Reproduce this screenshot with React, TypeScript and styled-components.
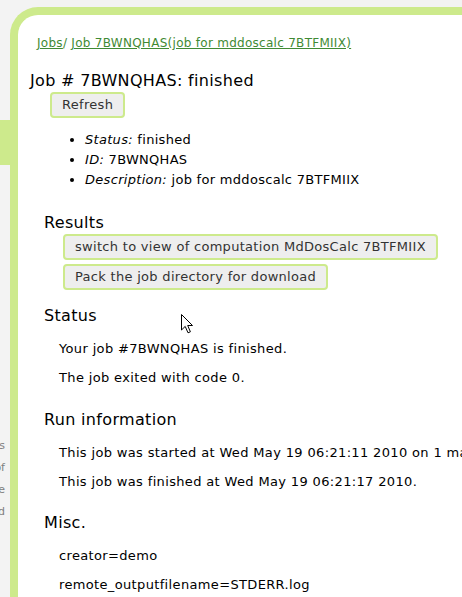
import React from "react";
import styled, { createGlobalStyle } from "styled-components";

const GREEN = "#cdea8c";

const Global = createGlobalStyle`
  html, body {
    margin: 0;
    padding: 0;
    background: #f3f3f3;
    overflow: hidden;
    font-family: "DejaVu Sans", Verdana, sans-serif;
  }
`;

const Page = styled.div`
  display: flex;
  align-items: flex-start;
  width: 900px;
  min-height: 597px;
  position: relative;
`;

const Sidebar = styled.div`
  width: 10px;
  flex-shrink: 0;
  overflow: hidden;
  display: flex;
  flex-direction: column;
  align-items: flex-end;
`;

const Tab = styled.div`
  width: 10px;
  height: 45px;
  margin-top: 120px;
  background: ${GREEN};
`;

const SideText = styled.div`
  margin-top: 270px;
  padding-right: 5px;
  font-size: 11px;
  line-height: 22px;
  color: #808080;
  text-align: right;
  white-space: nowrap;
  display: flex;
  flex-direction: column;
  align-items: flex-end;
`;

const Panel = styled.div`
  flex: 1;
  margin-top: 7px;
  min-height: 590px;
  background: #fff;
  border-left: 8px solid ${GREEN};
  border-top: 8px solid ${GREEN};
  border-top-left-radius: 28px;
  padding: 21px 0 0 12px;
  color: #000;
`;

const Crumbs = styled.div`
  margin-left: 7px;
  font-size: 12px;
  line-height: 14px;
  letter-spacing: 0.28px;
  color: #3f8a34;
`;

const CrumbLink = styled.a`
  color: #3f8a34;
  text-decoration: underline;
`;

const Title = styled.h1`
  margin: 21px 0 0 0;
  font-size: 16px;
  line-height: 20px;
  letter-spacing: 0.33px;
  font-weight: normal;
`;

const Button = styled.button<{ $indent?: number; $top?: number }>`
  display: block;
  margin: ${(p) => p.$top ?? 0}px 0 0 ${(p) => p.$indent ?? 0}px;
  padding: 3px 10px;
  font-family: "DejaVu Sans", Verdana, sans-serif;
  font-size: 13px;
  line-height: 16px;
  letter-spacing: 0.3px;
  color: #333;
  background: #eeeeee;
  border: 2px solid ${GREEN};
  border-radius: 4px;
  white-space: nowrap;
`;

const Facts = styled.ul`
  margin: 11.5px 0 0 0;
  padding-left: 55px;
  font-size: 13px;
  line-height: 20px;
  letter-spacing: 0.3px;
`;

const Label = styled.em`
  font-style: italic;
`;

const Section = styled.section<{ $top: number }>`
  margin: ${(p) => p.$top}px 0 0 14px;
  display: flex;
  flex-direction: column;
  align-items: flex-start;
`;

const SectionTitle = styled.h2`
  margin: 0;
  font-size: 16px;
  line-height: 20px;
  letter-spacing: 0.33px;
  font-weight: normal;
`;

const Para = styled.p<{ $first?: boolean }>`
  margin: ${(p) => (p.$first ? 15 : 13)}px 0 0 15px;
  font-size: 13px;
  line-height: 16px;
  letter-spacing: 0.35px;
  white-space: nowrap;
`;

const Cursor = styled.svg`
  position: absolute;
  left: 180px;
  top: 313px;
  pointer-events: none;
`;

export default function App() {
  return (
    <>
      <Global />
      <Page>
        <Sidebar>
          <Tab />
          <SideText>
            <span>jobs</span>
            <span>of</span>
            <span>are</span>
            <span>listed</span>
          </SideText>
        </Sidebar>
        <Panel>
          <Crumbs>
            <CrumbLink href="#">Jobs</CrumbLink>/{" "}
            <CrumbLink href="#">Job 7BWNQHAS(job for mddoscalc 7BTFMIIX)</CrumbLink>
          </Crumbs>
          <Title>Job # 7BWNQHAS: finished</Title>
          <Button $indent={20} $top={1}>Refresh</Button>
          <Facts>
            <li>
              <Label>Status:</Label> finished
            </li>
            <li>
              <Label>ID:</Label> 7BWNQHAS
            </li>
            <li>
              <Label>Description:</Label> job for mddoscalc 7BTFMIIX
            </li>
          </Facts>
          <Section $top={23}>
            <SectionTitle>Results</SectionTitle>
            <Button $indent={19} $top={1.5}>
              switch to view of computation MdDosCalc 7BTFMIIX
            </Button>
            <Button $indent={19} $top={4}>
              Pack the job directory for download
            </Button>
          </Section>
          <Section $top={15.5}>
            <SectionTitle>Status</SectionTitle>
            <Para $first>Your job #7BWNQHAS is finished.</Para>
            <Para>The job exited with code 0.</Para>
          </Section>
          <Section $top={24}>
            <SectionTitle>Run information</SectionTitle>
            <Para $first>This job was started at Wed May 19 06:21:11 2010 on 1 machine(s).</Para>
            <Para>This job was finished at Wed May 19 06:21:17 2010.</Para>
          </Section>
          <Section $top={23.5}>
            <SectionTitle>Misc.</SectionTitle>
            <Para $first>creator=demo</Para>
            <Para>remote_outputfilename=STDERR.log</Para>
          </Section>
        </Panel>
        <Cursor width="14" height="22" viewBox="0 0 14 22">
          <path
            d="M1.5 1.5 L1.5 17 L5.2 13.4 L8 19.8 L10.4 18.8 L7.7 12.5 L12.5 12.5 Z"
            fill="#fff"
            stroke="#000"
            strokeWidth="1"
            strokeLinejoin="round"
          />
        </Cursor>
      </Page>
    </>
  );
}
